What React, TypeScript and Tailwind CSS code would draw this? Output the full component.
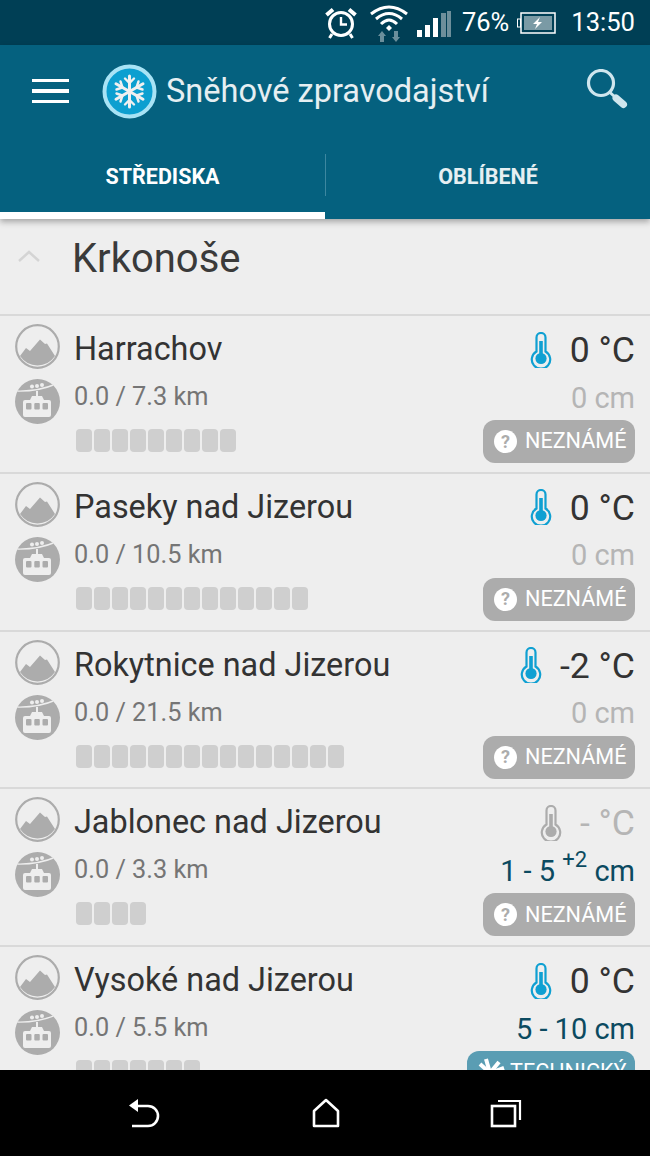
import React from "react";

function Mountain() {
  return (
    <svg width="45" height="45" viewBox="0 0 45 45" className="block">
      <circle cx="22.5" cy="22.5" r="21.3" fill="none" stroke="#acacac" strokeWidth="2.2" />
      <path d="M5 32 L11 24 L15 27 L25 15.5 L30 20 L32 19.5 L40 32 A21 21 0 0 1 5 32 Z" fill="#acacac" />
    </svg>
  );
}

function Lift() {
  return (
    <svg width="45" height="45" viewBox="0 0 45 45" className="block">
      <defs>
        <clipPath id="liftc"><circle cx="22.5" cy="22.5" r="22.5" /></clipPath>
      </defs>
      <circle cx="22.5" cy="22.5" r="22.5" fill="#acacac" />
      <g clipPath="url(#liftc)">
        <path d="M0 12 Q22 13 41 5" stroke="#eeeeee" strokeWidth="1.4" fill="none" />
        <circle cx="17" cy="7.5" r="2" fill="#eeeeee" />
        <circle cx="22" cy="7" r="2" fill="#eeeeee" />
        <circle cx="27" cy="6" r="2" fill="#eeeeee" />
        <path d="M22 12 V17" stroke="#eeeeee" strokeWidth="2" />
        <path d="M17 17 H27 L29 21 H34 Q36 21 36 23 V36 Q36 38 34 38 H10 Q8 38 8 36 V23 Q8 21 10 21 H15 Z" fill="#eeeeee" />
        <rect x="11" y="24" width="5.5" height="6.5" rx="1" fill="#acacac" />
        <rect x="19.3" y="24" width="5.5" height="6.5" rx="1" fill="#acacac" />
        <rect x="27.5" y="24" width="5.5" height="6.5" rx="1" fill="#acacac" />
      </g>
    </svg>
  );
}

function Thermo({ active }: { active: boolean }) {
  const c = active ? "#0fa0d2" : "#acacac";
  return (
    <svg width="22" height="36" viewBox="0 0 22 36" className="-mt-[3px] block">
      <path d="M6.5 19.5 V5.5 a4.5 4.5 0 0 1 9 0 V19.5 a9.2 9.2 0 1 1 -9 0 Z" fill="none" stroke={c} strokeWidth="2.2" />
      <rect x="9.2" y="9" width="3.6" height="14" fill={c} />
      <circle cx="11" cy="26.5" r="5.6" fill={c} />
    </svg>
  );
}

function Question() {
  return (
    <span className="flex h-[23px] w-[23px] items-center justify-center rounded-full bg-white text-[18px] font-bold leading-none text-[#acacac]">?</span>
  );
}

function Rays() {
  return (
    <svg width="30" height="30" viewBox="0 0 30 30" className="block">
      <g stroke="#ffffff" strokeWidth="4" strokeLinecap="butt">
        <path d="M15 15 L5 6" />
        <path d="M15 15 L11 1" />
        <path d="M15 15 L24 4" />
        <path d="M15 15 L29 10" />
        <path d="M15 15 L1 14" />
      </g>
    </svg>
  );
}

type Row = {
  name: string;
  km: string;
  bars: number;
  temp: string;
  tempActive: boolean;
  snow: React.ReactNode;
  snowKnown: boolean;
  badge: "u" | "t";
};

const rows: Row[] = [
  { name: "Harrachov", km: "0.0 / 7.3 km", bars: 9, temp: "0 °C", tempActive: true, snow: "0 cm", snowKnown: false, badge: "u" },
  { name: "Paseky nad Jizerou", km: "0.0 / 10.5 km", bars: 13, temp: "0 °C", tempActive: true, snow: "0 cm", snowKnown: false, badge: "u" },
  { name: "Rokytnice nad Jizerou", km: "0.0 / 21.5 km", bars: 15, temp: "-2 °C", tempActive: true, snow: "0 cm", snowKnown: false, badge: "u" },
  {
    name: "Jablonec nad Jizerou",
    km: "0.0 / 3.3 km",
    bars: 4,
    temp: "- °C",
    tempActive: false,
    snow: (
      <>
        1 - 5 <sup className="text-[22px] leading-none">+2</sup> cm
      </>
    ),
    snowKnown: true,
    badge: "u",
  },
  { name: "Vysoké nad Jizerou", km: "0.0 / 5.5 km", bars: 7, temp: "0 °C", tempActive: true, snow: "5 - 10 cm", snowKnown: true, badge: "t" },
];

function ResortRow({ r }: { r: Row }) {
  return (
    <div className="flex h-[157.75px] shrink-0 border-t-2 border-[#d9d9d9] pl-[15px] pr-[15px] pt-[8px]">
      <div className="flex w-[59px] shrink-0 flex-col gap-[10px]">
        <Mountain />
        <Lift />
      </div>
      <div className="flex min-w-0 flex-1 flex-col pt-[2px]">
        <div className="h-[46px] whitespace-nowrap text-[32.4px] leading-[46px] text-[#333333]">{r.name}</div>
        <div className="mt-[8px] h-[34px] text-[25.3px] leading-[34px] text-[#757575]">{r.km}</div>
        <div className="mt-[15px] flex gap-[2px] pl-[2px]">
          {Array.from({ length: r.bars }).map((_, i) => (
            <span key={i} className="h-[23px] w-[16px] rounded-[4px] bg-[#cfcfcf]" />
          ))}
        </div>
      </div>
      <div className="flex shrink-0 flex-col items-end pt-[4px]">
        <div className={`flex h-[46px] items-center gap-[18px] text-[35.6px] leading-none ${r.tempActive ? "text-[#333333]" : "text-[#b5b5b5]"}`}>
          <Thermo active={r.tempActive} />
          <span>{r.temp}</span>
        </div>
        <div className={`mt-[3px] flex h-[42px] items-center whitespace-pre text-[29px] leading-none ${r.snowKnown ? "text-[#0b4a60]" : "text-[#b5b5b5]"}`}>
          {r.snow}
        </div>
        {r.badge === "u" ? (
          <div className="mt-[1px] flex h-[43px] w-[152px] items-center gap-[8px] rounded-[12px] bg-[#acacac] pl-[11px] text-[21.6px] text-white">
            <Question />
            <span>NEZNÁMÉ</span>
          </div>
        ) : (
          <div className="mt-[1px] flex h-[43px] w-[168px] items-center gap-[5px] rounded-[12px] bg-[#5a9db3] pl-[8px] text-[21.6px] text-white">
            <Rays />
            <span>TECHNICKÝ</span>
          </div>
        )}
      </div>
    </div>
  );
}

export default function App() {
  return (
    <div className="flex h-[1156px] w-[650px] flex-col overflow-hidden bg-[#eeeeee] font-['Roboto',sans-serif]">
      <div className="flex h-[45px] shrink-0 items-center justify-end bg-[#003f55] pr-[15px] text-white">
        <svg width="34" height="34" viewBox="0 0 34 34" className="mr-[11px]" fill="none" stroke="#fff">
          <circle cx="17" cy="18" r="11.5" strokeWidth="3" />
          <path d="M17 11 V18.5 H23" strokeWidth="2.4" />
          <path d="M2.5 9 L9 3.5 M31.5 9 L25 3.5" strokeWidth="4" />
          <path d="M8 28 L5.5 32 M26 28 L28.5 32" strokeWidth="3" />
        </svg>
        <svg width="40" height="40" viewBox="0 0 40 40" className="mr-[7px]" fill="none">
          <path d="M2 11 Q20 -3 38 11 M7 16 Q20 5 33 16 M12 21 Q20 13 28 21" stroke="#fff" strokeWidth="3" />
          <path d="M20 22 L23 25 L20 28 L17 25 Z" fill="#fff" />
          <path d="M13 28 L17 33 H15 V39 H11 V33 H9 Z M27 39 L23 34 H25 V28 H29 V34 H31 Z" fill="#6b8f9c" />
        </svg>
        <svg width="36" height="30" viewBox="0 0 36 30" className="mr-[10px]">
          <rect x="1" y="22" width="5" height="7" fill="#fff" />
          <rect x="9" y="17" width="5" height="12" fill="#fff" />
          <rect x="17" y="10" width="5" height="19" fill="#fff" />
          <rect x="25" y="5" width="5" height="24" fill="#6d8f9b" />
          <rect x="31" y="3" width="4" height="26" fill="#6d8f9b" />
        </svg>
        <span className="text-[25.5px]">76%</span>
        <svg width="40" height="26" viewBox="0 0 40 26" className="ml-[8px] mr-[14px]" fill="none">
          <rect x="4" y="3" width="34" height="20" stroke="#fff" strokeWidth="1.5" />
          <rect x="0.5" y="9" width="3" height="8" stroke="#fff" strokeWidth="1" />
          <rect x="7" y="6" width="28" height="14" fill="#7a9aa5" />
          <path d="M23 7 L16 14 H20 L18 19 L25 12 H21 Z" fill="#fff" />
        </svg>
        <span className="text-[25.6px]">13:50</span>
      </div>

      <div className="relative z-10 shrink-0 bg-[#05617f] shadow-[0_3px_6px_rgba(0,0,0,0.3)]">
        <div className="flex h-[92px] items-center pl-[32px] pr-[22px]">
          <div className="flex w-[37px] flex-col gap-[7px]">
            <span className="h-[3.5px] bg-white" />
            <span className="h-[3.5px] bg-white" />
            <span className="h-[3.5px] bg-white" />
          </div>
          <svg width="55" height="55" viewBox="0 0 55 55" className="ml-[33px]">
            <circle cx="27.5" cy="27.5" r="25" fill="#0c9fd0" stroke="#a8e3f5" strokeWidth="4" />
            <g stroke="#f0f0f0" strokeWidth="3" strokeLinecap="round" fill="none">
              <path d="M27.5 12 V43 M14 19.7 L41 35.3 M14 35.3 L41 19.7" />
              <path d="M23 14.5 L27.5 19 L32 14.5 M23 40.5 L27.5 36 L32 40.5 M14.5 25.5 L20.5 23.5 L18.5 17.5 M40.5 25.5 L34.5 23.5 L36.5 17.5 M14.5 29.5 L20.5 31.5 L18.5 37.5 M40.5 29.5 L34.5 31.5 L36.5 37.5" strokeWidth="2.4" />
            </g>
          </svg>
          <span className="ml-[9px] flex-1 whitespace-nowrap text-[32.5px] text-white/90">Sněhové zpravodajství</span>
          <svg width="44" height="44" viewBox="0 0 44 44" fill="none">
            <circle cx="17" cy="14" r="12.5" stroke="#cfe6ee" strokeWidth="3.2" />
            <path d="M26 23.5 L31 28" stroke="#cfe6ee" strokeWidth="3" />
            <path d="M32 29 L39.5 35.5" stroke="#cfe6ee" strokeWidth="7" strokeLinecap="round" />
          </svg>
        </div>
        <div className="flex h-[82px]">
          <div className="flex h-full w-[325px] flex-col">
            <div className="flex flex-1 items-center justify-center pt-[6px] text-[21.5px] font-bold text-white">STŘEDISKA</div>
            <div className="h-[7px] bg-white" />
          </div>
          <div className="flex h-full flex-1 items-start">
            <div className="mt-[17px] h-[42px] w-px bg-[#3d87a0]" />
            <div className="flex h-[75px] flex-1 items-center justify-center pt-[6px] text-[21.5px] font-bold text-white/90">OBLÍBENÉ</div>
          </div>
        </div>
      </div>

      <main className="min-h-0 flex-1 overflow-hidden">
        <div className="flex h-[95px] items-start pl-[17px] pt-[16px]">
          <svg width="24" height="14" viewBox="0 0 24 14" className="mt-[14px]" fill="none">
            <path d="M2 12 L12 3 L22 12" stroke="#d4d4d4" strokeWidth="2.5" />
          </svg>
          <span className="ml-[31px] text-[40px] leading-[48px] text-[#3a3a3a]">Krkonoše</span>
        </div>
        {rows.map((r) => (
          <ResortRow key={r.name} r={r} />
        ))}
      </main>

      <nav className="flex h-[86px] shrink-0 items-center justify-between bg-black pb-[1px] pl-[129px] pr-[128px]">
        <svg width="32" height="30" viewBox="0 0 32 30" fill="none">
          <path d="M3 8 H19 A10 10 0 0 1 19 28 H3" stroke="#fff" strokeWidth="2.6" />
          <path d="M0 7.5 L9 1 V14 Z" fill="#fff" />
        </svg>
        <svg width="30" height="30" viewBox="0 0 30 30" fill="none">
          <path d="M15 2 L27 13 V28 H3 V13 Z" stroke="#fff" strokeWidth="2.6" strokeLinejoin="round" />
        </svg>
        <svg width="32" height="30" viewBox="0 0 32 30" fill="none">
          <rect x="2" y="8" width="23" height="20" stroke="#fff" strokeWidth="2.6" />
          <path d="M8 3 H30 V22" stroke="#fff" strokeWidth="2.2" />
        </svg>
      </nav>
    </div>
  );
}
